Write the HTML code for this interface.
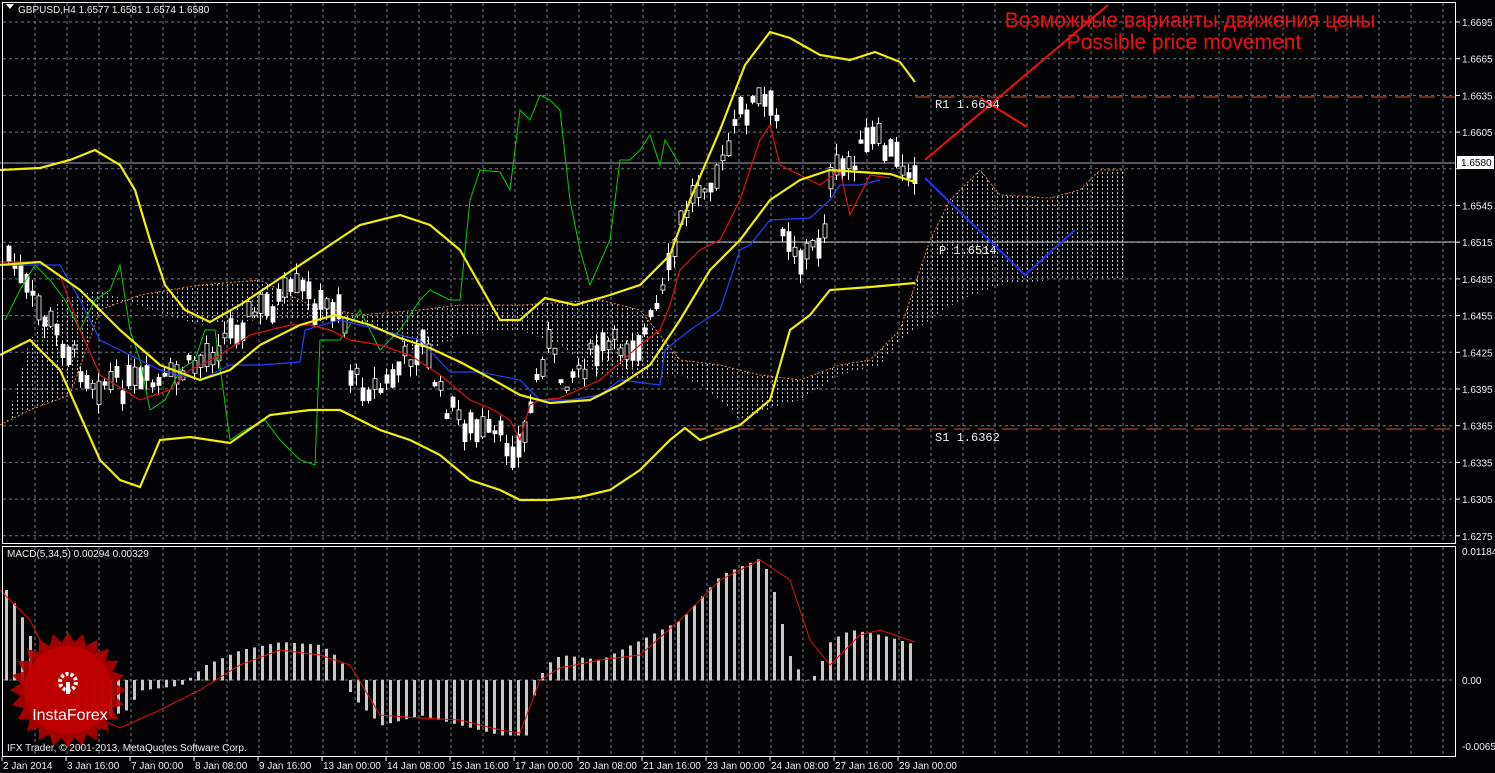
<!DOCTYPE html>
<html><head><meta charset="utf-8"><style>
html,body{margin:0;padding:0;background:#000;}
svg{display:block;font-family:"Liberation Sans",sans-serif;}
</style></head><body>
<svg id="s" width="1495" height="773" xmlns="http://www.w3.org/2000/svg">
<defs>
<pattern id="hatch" width="5" height="4" patternUnits="userSpaceOnUse">
<rect x="2" y="0" width="1" height="2" fill="#ddd"/>
</pattern>
</defs>
<rect width="1495" height="773" fill="#020205"/>
<g id="grid"></g>
<polygon fill="url(#hatch)" opacity="0.85" points="0,425 30,410 70,395 100,310 140,295 200,285 260,280 310,305 360,315 420,310 460,305 520,305 600,300 640,310 680,360 720,365 760,375 800,380 840,365 870,360 900,330 930,240 950,200 980,170 1000,195 1050,198 1080,190 1100,170 1125,170 1125,280 1090,280 1050,280 1000,285 960,300 930,320 900,340 880,365 840,375 800,400 780,405 740,420 720,400 700,385 680,375 640,380 600,375 560,345 520,330 460,335 420,355 400,340 360,322 320,318 260,320 200,325 150,310 100,290 60,300 30,340 0,445"/>
<polyline fill="none" stroke="#e08040" stroke-width="1" stroke-dasharray="2,2" points="0,425 30,410 70,395 100,310 140,295 200,285 260,280 310,305 360,315 420,310 460,305 520,305 600,300 640,310 680,360 720,365 760,375 800,380 840,365 870,360 900,330 930,240 950,200 980,170 1000,195 1050,198 1080,190 1100,170 1125,170"/>
<line x1="0" y1="163" x2="1456" y2="163" stroke="#aab" stroke-width="1"/>
<line x1="675" y1="242" x2="1456" y2="242" stroke="#ccc" stroke-width="1"/>
<line x1="915" y1="97" x2="1456" y2="97" stroke="#d05030" stroke-dasharray="16,8"/>
<line x1="690" y1="429" x2="1456" y2="429" stroke="#d05030" stroke-dasharray="16,8"/>
<g id="candles"></g>
<polyline fill="none" stroke="#00d000" stroke-width="1" points="5,320 20,290 35,265 50,280 65,300 80,330 95,300 110,290 120,265 130,330 140,360 150,410 165,400 180,370 195,360 205,330 215,330 230,440 245,430 265,420 280,440 300,460 315,465 320,340 340,340 360,310 380,350 400,330 420,300 430,290 450,300 460,300 470,200 480,170 500,172 510,190 520,110 530,120 540,95 550,100 560,110 570,200 580,250 590,285 610,240 620,160 630,160 640,150 650,135 660,165 665,140 680,165"/>
<polyline fill="none" stroke="#2040ff" stroke-width="1.2" points="0,265 60,265 80,300 100,340 160,370 200,380 230,365 260,365 300,362 305,330 340,320 380,330 420,340 450,372 480,372 520,380 540,400 570,400 600,395 620,380 660,385 665,350 690,330 720,310 740,250 750,245 770,220 810,218 830,200 840,185 860,185 880,180"/>
<polyline fill="none" stroke="#e01010" stroke-width="1.2" points="0,262 40,262 60,275 80,330 100,375 140,400 170,390 190,370 220,355 250,335 290,325 310,325 330,330 350,340 380,345 410,355 440,375 470,400 490,408 510,420 520,440 530,405 540,400 560,398 600,380 640,345 660,330 670,305 680,270 700,250 720,240 740,200 760,140 770,125 780,165 800,175 820,185 840,170 850,215 860,195 870,175 890,178"/>
<g fill="none" stroke="#f0f000" stroke-width="2.2">
<polyline points="0,170 40,168 70,160 95,150 120,165 135,190 150,240 165,285 185,310 210,322 240,305 270,285 300,265 330,245 360,225 400,215 430,225 460,250 480,285 500,320 520,320 545,298 575,305 610,295 640,285 670,255 690,200 720,130 745,65 770,32 790,38 820,55 850,60 875,52 900,62 915,82"/>
<polyline points="0,265 40,262 80,290 120,330 160,365 200,380 230,370 260,345 300,325 335,315 370,325 400,338 430,348 460,362 490,378 520,395 550,403 590,400 620,385 650,365 680,320 710,270 740,240 770,200 800,180 830,170 860,172 890,174 915,182"/>
<polyline points="0,355 30,340 60,370 80,415 100,460 120,480 140,487 160,440 190,437 230,443 270,415 310,410 340,410 380,430 410,440 440,455 470,480 500,490 520,500 550,500 580,497 610,490 640,470 670,440 685,428 700,440 740,425 770,400 790,330 810,315 830,290 870,287 915,283"/>
</g>
<polyline fill="none" stroke="#2030ff" stroke-width="2" points="925,178 1025,275 1075,230"/>
<line x1="925" y1="160" x2="1108" y2="5" stroke="#f01010" stroke-width="2"/>
<line x1="980" y1="98" x2="1027" y2="127" stroke="#f01010" stroke-width="2"/>
<g font-family="Liberation Mono,monospace" font-size="12" fill="#eee">
<text x="935" y="108">R1 1.6634</text>
<text x="939" y="254">P 1.6514</text>
<text x="935" y="441">S1 1.6362</text>
</g>
<g fill="#ee1010" font-size="21" text-anchor="middle">
<text x="1190" y="27">Возможные варианты движения цены</text>
<text x="1184" y="49">Possible price movement</text>
</g>
<g id="macd"></g>
<polyline fill="none" stroke="#e01010" stroke-width="1" points="0,590 30,620 60,680 90,715 120,728 160,710 200,690 240,665 280,650 320,655 350,665 380,715 420,718 460,720 500,730 520,733 540,680 560,668 600,660 640,655 680,620 720,580 760,560 790,580 810,640 830,665 860,635 880,630 915,642"/>
<g>
<polygon id="star" fill="#b00000" opacity="0.9"/>
<circle cx="68" cy="690" r="44" fill="#c00000" opacity="0.9"/>
<circle cx="68" cy="682" r="8" fill="none" stroke="#fff" stroke-width="4" stroke-dasharray="3,2"/>
<rect x="66" y="682" width="4" height="12" fill="#fff"/>
<text x="70" y="720" fill="#fff" font-size="16" text-anchor="middle">InstaForex</text>
</g>
<text x="7" y="751" fill="#eee" font-size="10">IFX Trader, © 2001-2013, MetaQuotes Software Corp.</text>
<rect x="2.5" y="2.5" width="1453" height="541" fill="none" stroke="#fff"/>
<rect x="2.5" y="546.5" width="1453" height="210" fill="none" stroke="#fff"/>
<g font-size="10" fill="#eee" id="axis">
<path d="M6 4 l8 0 l-4 5z" fill="#fff"/>
<text x="18" y="13">GBPUSD,H4  1.6577 1.6581 1.6574 1.6580</text>
<text x="7" y="557">MACD(5,34,5) 0.00294 0.00329</text>
</g>
</svg>
<script>
var NS="http://www.w3.org/2000/svg";
function el(p,t,a,txt){var e=document.createElementNS(NS,t);for(var k in a)e.setAttribute(k,a[k]);if(txt)e.textContent=txt;p.appendChild(e);return e;}
var g=document.getElementById('grid'),ax=document.getElementById('axis');
for(var x=35;x<1456;x+=32){el(g,'line',{x1:x,y1:3,x2:x,y2:543,stroke:'#6a7888','stroke-dasharray':'3,3'});el(g,'line',{x1:x,y1:547,x2:x,y2:756,stroke:'#6a7888','stroke-dasharray':'3,3'});}
var prices=['1.6695','1.6665','1.6635','1.6605','1.6575','1.6545','1.6515','1.6485','1.6455','1.6425','1.6395','1.6365','1.6335','1.6305','1.6275'];
for(var i=0;i<15;i++){var y=22+i*36.7;el(g,'line',{x1:3,y1:y,x2:1456,y2:y,stroke:'#6a7888','stroke-dasharray':'3,3'});el(ax,'line',{x1:1456,y1:y,x2:1460,y2:y,stroke:'#fff'});if(i!=4)el(ax,'text',{x:1462,y:y+4},prices[i]);}
el(g,'line',{x1:3,y1:680,x2:1456,y2:680,stroke:'#6a7888','stroke-dasharray':'3,3'});
el(ax,'rect',{x:1457,y:156,width:37,height:13,fill:'#fff'});el(ax,'text',{x:1461,y:166,fill:'#000'},'1.6580');
el(ax,'text',{x:1462,y:555},'0.01184');el(ax,'text',{x:1462,y:684},'0.00');el(ax,'text',{x:1462,y:750},'-0.00655');
var t=['2 Jan 2014','3 Jan 16:00','7 Jan 00:00','8 Jan 08:00','9 Jan 16:00','13 Jan 00:00','14 Jan 08:00','15 Jan 16:00','17 Jan 00:00','20 Jan 08:00','21 Jan 16:00','23 Jan 00:00','24 Jan 08:00','27 Jan 16:00','29 Jan 00:00'];
for(var i=0;i<t.length;i++){el(ax,'text',{x:3+i*64,y:769},t[i]);el(ax,'line',{x1:2+i*64,y1:757,x2:2+i*64,y2:761,stroke:'#fff'});}
function interp(pts,x){for(var i=1;i<pts.length;i++){if(x<=pts[i][0]){var a=pts[i-1],b=pts[i];return a[1]+(b[1]-a[1])*(x-a[0])/(b[0]-a[0]);}}return pts[pts.length-1][1];}
var mid=[[0,240],[30,300],[60,340],[90,380],[120,385],[160,385],[200,360],[240,320],[280,300],[300,290],[320,310],[340,300],[350,380],[380,390],[420,340],[440,400],[470,430],[500,440],[520,450],[530,400],[545,340],[560,380],[600,350],[640,340],[660,300],[680,220],[700,180],[720,170],[740,110],[760,100],[775,120],[780,220],[800,260],[820,240],[830,180],[850,160],[870,140],[885,150],[900,165],[915,165]];
var seed=7;function rnd(){seed=(seed*9301+49297)%233280;return seed/233280;}
var c=document.getElementById('candles');
for(var x=7;x<=915;x+=6){var y=interp(mid,x)+(rnd()-0.5)*25;var h=3+rnd()*22;var w1=y-h/2-rnd()*12,w2=y+h/2+rnd()*12;
el(c,'line',{x1:x+1.5,y1:w1,x2:x+1.5,y2:w2,stroke:'#fff'});
el(c,'rect',{x:x,y:y-h/2,width:4,height:h,fill:rnd()<0.5?'#fff':'#000',stroke:'#fff','stroke-width':0.8});}
var mp=[[5,-90],[20,-65],[35,-30],[45,10],[70,35],[100,40],[125,30],[140,10],[180,5],[205,-15],[240,-30],[280,-38],[320,-35],[340,-20],[350,15],[380,45],[420,35],[460,45],[500,55],[525,55],[535,5],[545,-15],[560,-25],[600,-20],[640,-40],[680,-60],[720,-105],[760,-122],[770,-100],[790,-20],[805,0],[815,-5],[830,-40],[850,-50],[880,-45],[915,-35]];
var m=document.getElementById('macd');
for(var x=5;x<=915;x+=8){var v=interp(mp,x);el(m,'rect',{x:x,y:Math.min(680,680+v),width:3,height:Math.abs(v)+0.5,fill:'#c8c8c8'});}
var pts=[];for(var i=0;i<48;i++){var a=i*Math.PI/24,r=i%2?48:58;pts.push((68+r*Math.cos(a)).toFixed(1)+','+(690+r*Math.sin(a)).toFixed(1));}
document.getElementById('star').setAttribute('points',pts.join(' '));
</script>
</body></html>
